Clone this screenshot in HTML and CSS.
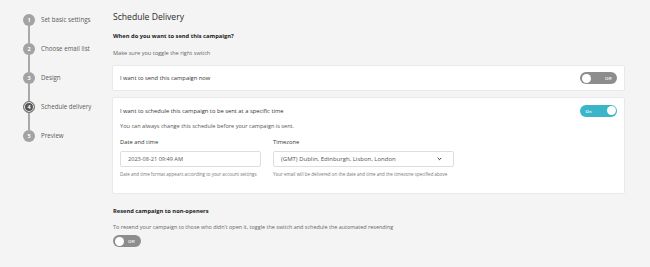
FILE: index.html
```html
<!DOCTYPE html>
<html>
<head>
<meta charset="utf-8">
<link rel="stylesheet" href="styles.css">
</head>
<body>
<div class="page">
  <nav class="stepper">
    <div class="step">
      <div class="marker"><span class="dot">1</span><span class="line"></span></div>
      <span class="label">Set basic settings</span>
    </div>
    <div class="step">
      <div class="marker"><span class="dot">2</span><span class="line"></span></div>
      <span class="label">Choose email list</span>
    </div>
    <div class="step">
      <div class="marker"><span class="dot">3</span><span class="line"></span></div>
      <span class="label">Design</span>
    </div>
    <div class="step">
      <div class="marker"><span class="dot active">4</span><span class="line"></span></div>
      <span class="label">Schedule delivery</span>
    </div>
    <div class="step">
      <div class="marker"><span class="dot">5</span></div>
      <span class="label">Preview</span>
    </div>
  </nav>

  <main class="content">
    <h1 class="title">Schedule Delivery</h1>
    <h2 class="question">When do you want to send this campaign?</h2>
    <p class="hint">Make sure you toggle the right switch</p>

    <section class="card card-now">
      <span class="card-title">I want to send this campaign now</span>
      <span class="toggle off"><span class="knob"></span><span class="tlabel">Off</span></span>
    </section>

    <section class="card card-schedule">
      <div class="card-head">
        <span class="card-title">I want to schedule this campaign to be sent at a specific time</span>
        <span class="toggle on"><span class="tlabel">On</span><span class="knob"></span></span>
      </div>
      <p class="card-desc">You can always change this schedule before your campaign is sent.</p>
      <div class="fields">
        <div class="field field-date">
          <label class="flabel">Date and time</label>
          <div class="input">2023-08-21 09:49 AM</div>
          <p class="help">Date and time format appears according to your account settings</p>
        </div>
        <div class="field field-tz">
          <label class="flabel">Timezone</label>
          <div class="input select">
            <span>(GMT) Dublin, Edinburgh, Lisbon, London</span>
            <svg class="chev" width="5" height="4" viewBox="0 0 5 4"><path d="M0.7 0.9 L2.5 2.7 L4.3 0.9" fill="none" stroke="#333" stroke-width="1"/></svg>
          </div>
          <p class="help">Your email will be delivered on the date and time and the timezone specified above</p>
        </div>
      </div>
    </section>

    <h2 class="question resend">Resend campaign to non-openers</h2>
    <p class="hint resend-desc">To resend your campaign to those who didn't open it, toggle the switch and schedule the automated resending</p>
    <span class="toggle off small"><span class="knob"></span><span class="tlabel">Off</span></span>
  </main>
</div>
</body>
</html>
```

FILE: styles.css
```css
html, body {
  margin: 0;
  padding: 0;
}
body {
  background: #f4f4f4;
  font-family: "Open Sans", "Noto Sans", sans-serif;
  color: #333;
  width: 650px;
  height: 267px;
  overflow: hidden;
}
.page {
  display: flex;
  align-items: flex-start;
}

/* Stepper */
.stepper {
  width: 89px;
  padding: 14px 0 0 23px;
  display: flex;
  flex-direction: column;
}
.step {
  display: flex;
  align-items: flex-start;
  gap: 6px;
}
.marker {
  display: flex;
  flex-direction: column;
  align-items: center;
  width: 12px;
}
.dot {
  width: 12px;
  height: 12px;
  border-radius: 50%;
  background: #a3a3a3;
  color: #fff;
  font-size: 5.5px;
  font-weight: 700;
  display: flex;
  align-items: center;
  justify-content: center;
  box-sizing: border-box;
}
.dot.active {
  background: #555;
  border: 1.3px solid #777;
  box-shadow: inset 0 0 0 1px #f4f4f4;
}
.line {
  width: 1.5px;
  height: 17px;
  background: #a9a9a9;
}
.label {
  font-size: 6.2px;
  color: #5a5a5a;
  line-height: 12px;
}

/* Content */
.content {
  width: 513px;
  padding-top: 9px;
  display: flex;
  flex-direction: column;
  align-items: flex-start;
}
.title {
  margin: 0 0 0 1px;
  font-size: 8.6px;
  font-weight: 400;
  color: #2a2a2a;
  line-height: 16px;
}
.question {
  margin: 6px 0 0 1px;
  font-size: 5.75px;
  font-weight: 700;
  color: #222;
  line-height: 10px;
}
.hint {
  margin: 7px 0 0 1px;
  font-size: 5.6px;
  color: #666;
  line-height: 10px;
}
.card {
  box-sizing: border-box;
  width: 513px;
  background: #fff;
  border: 1px solid #e9e9e9;
  border-radius: 2px;
}
.card-title {
  font-size: 5.8px;
  color: #333;
}
.card-now {
  margin-top: 7px;
  height: 26px;
  display: flex;
  align-items: center;
  justify-content: space-between;
  padding: 0 7px 0 7px;
}
.card-schedule {
  margin-top: 6px;
  height: 97px;
  padding: 6px 7px 0 7px;
}
.card-head {
  display: flex;
  align-items: center;
  justify-content: space-between;
  height: 13px;
}
.card-desc {
  margin: 4px 0 0 0;
  font-size: 5.6px;
  color: #555;
  line-height: 10px;
}
.fields {
  display: flex;
  gap: 12px;
  margin-top: 6px;
}
.flabel {
  display: block;
  font-size: 5.8px;
  color: #333;
  line-height: 10px;
}
.input {
  box-sizing: border-box;
  margin-top: 4px;
  height: 16px;
  background: #fff;
  border: 1px solid #dedede;
  border-radius: 2px;
  font-size: 5.6px;
  color: #555;
  padding: 0 7px;
  display: flex;
  align-items: center;
  justify-content: space-between;
}
.input.select { font-size: 6px; }
.field-date .input { width: 141px; }
.field-tz .input { width: 181px; }
.chev { margin-right: 4px; }
.help {
  margin: 2px 0 0 0;
  font-size: 4.5px;
  color: #777;
  line-height: 10px;
}

/* Toggle */
.toggle {
  box-sizing: border-box;
  width: 37px;
  height: 12px;
  border-radius: 6px;
  display: flex;
  align-items: center;
  justify-content: space-between;
  padding: 0 1.5px;
  flex: none;
}
.toggle .knob {
  width: 9px;
  height: 9px;
  border-radius: 50%;
  background: #fff;
}
.toggle .tlabel {
  font-size: 4.3px;
  color: #fff;
  font-weight: 600;
}
.toggle.off {
  background: #8d8d8d;
}
.toggle.off .tlabel { margin-right: 4px; }
.toggle.on {
  background: #3ab6c8;
}
.toggle.on .tlabel { margin-left: 4px; }
.toggle.small { width: 28px; }
.toggle.small .tlabel { margin-right: 5px; }

.resend {
  margin-top: 12px;
}
.resend-desc {
  margin-top: 6px;
  font-size: 5.45px;
}
.content > .toggle.small {
  margin-top: 3px;
  margin-left: 1px;
}
```
